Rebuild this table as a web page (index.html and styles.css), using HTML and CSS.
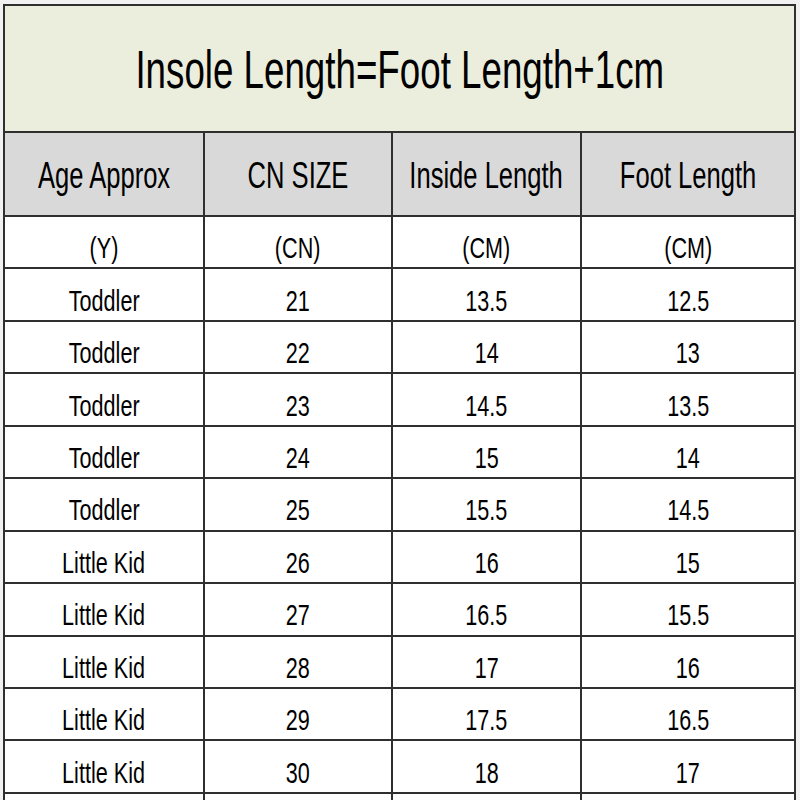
FILE: index.html
```html
<!DOCTYPE html>
<html>
<head>
<meta charset="utf-8">
<link rel="stylesheet" href="styles.css">
</head>
<body>
<div class="sheet">
  <div class="grid">
    <div class="cell title"><span class="txt t-title">Insole Length=Foot Length+1cm</span></div>
    <div class="cell head"><span class="txt t-head">Age Approx</span></div>
    <div class="cell head"><span class="txt t-head">CN SIZE</span></div>
    <div class="cell head"><span class="txt t-head">Inside Length</span></div>
    <div class="cell head"><span class="txt t-head">Foot Length</span></div>

    <div class="cell"><span class="txt">(Y)</span></div>
    <div class="cell"><span class="txt">(CN)</span></div>
    <div class="cell"><span class="txt">(CM)</span></div>
    <div class="cell"><span class="txt">(CM)</span></div>

    <div class="cell"><span class="txt">Toddler</span></div>
    <div class="cell"><span class="txt">21</span></div>
    <div class="cell"><span class="txt">13.5</span></div>
    <div class="cell"><span class="txt">12.5</span></div>

    <div class="cell"><span class="txt">Toddler</span></div>
    <div class="cell"><span class="txt">22</span></div>
    <div class="cell"><span class="txt">14</span></div>
    <div class="cell"><span class="txt">13</span></div>

    <div class="cell"><span class="txt">Toddler</span></div>
    <div class="cell"><span class="txt">23</span></div>
    <div class="cell"><span class="txt">14.5</span></div>
    <div class="cell"><span class="txt">13.5</span></div>

    <div class="cell"><span class="txt">Toddler</span></div>
    <div class="cell"><span class="txt">24</span></div>
    <div class="cell"><span class="txt">15</span></div>
    <div class="cell"><span class="txt">14</span></div>

    <div class="cell"><span class="txt">Toddler</span></div>
    <div class="cell"><span class="txt">25</span></div>
    <div class="cell"><span class="txt">15.5</span></div>
    <div class="cell"><span class="txt">14.5</span></div>

    <div class="cell"><span class="txt">Little Kid</span></div>
    <div class="cell"><span class="txt">26</span></div>
    <div class="cell"><span class="txt">16</span></div>
    <div class="cell"><span class="txt">15</span></div>

    <div class="cell"><span class="txt">Little Kid</span></div>
    <div class="cell"><span class="txt">27</span></div>
    <div class="cell"><span class="txt">16.5</span></div>
    <div class="cell"><span class="txt">15.5</span></div>

    <div class="cell"><span class="txt">Little Kid</span></div>
    <div class="cell"><span class="txt">28</span></div>
    <div class="cell"><span class="txt">17</span></div>
    <div class="cell"><span class="txt">16</span></div>

    <div class="cell"><span class="txt">Little Kid</span></div>
    <div class="cell"><span class="txt">29</span></div>
    <div class="cell"><span class="txt">17.5</span></div>
    <div class="cell"><span class="txt">16.5</span></div>

    <div class="cell"><span class="txt">Little Kid</span></div>
    <div class="cell"><span class="txt">30</span></div>
    <div class="cell"><span class="txt">18</span></div>
    <div class="cell"><span class="txt">17</span></div>

    <div class="cell"></div>
    <div class="cell"></div>
    <div class="cell"></div>
    <div class="cell"></div>
  </div>
</div>
</body>
</html>
```

FILE: styles.css
```css
html, body {
  margin: 0;
  padding: 0;
  background: #ffffff;
  overflow: hidden;
}

body {
  width: 800px;
  height: 800px;
  font-family: "Liberation Sans", Arial, sans-serif;
  color: #000000;
}

.sheet {
  width: 800px;
  height: 800px;
  background: #f1f1f1;
  padding: 4px 0 0 3px;
  box-sizing: border-box;
  overflow: hidden;
}

.grid {
  display: grid;
  width: 793px;
  grid-template-columns: 198px 186px 187px 212px;
  grid-template-rows: 125px 82px repeat(12, 50.45px);
  gap: 2px;
  padding: 2px;
  box-sizing: border-box;
  background: #2f2f2f;
}

.cell {
  background: #ffffff;
  display: flex;
  align-items: center;
  justify-content: center;
  padding-top: 12px;
  box-sizing: border-box;
  overflow: hidden;
  white-space: nowrap;
}

.title {
  grid-column: 1 / -1;
  background: #ebeedd;
  padding-top: 0;
}

.head {
  background: #d9d9d9;
  padding-top: 3px;
}

.txt {
  display: inline-block;
  font-size: 30px;
  line-height: 1;
  transform: scaleX(0.72);
}

.t-title {
  font-size: 54px;
  transform: scaleX(0.68);
}

.t-head {
  font-size: 36px;
  transform: scaleX(0.71);
}
```
